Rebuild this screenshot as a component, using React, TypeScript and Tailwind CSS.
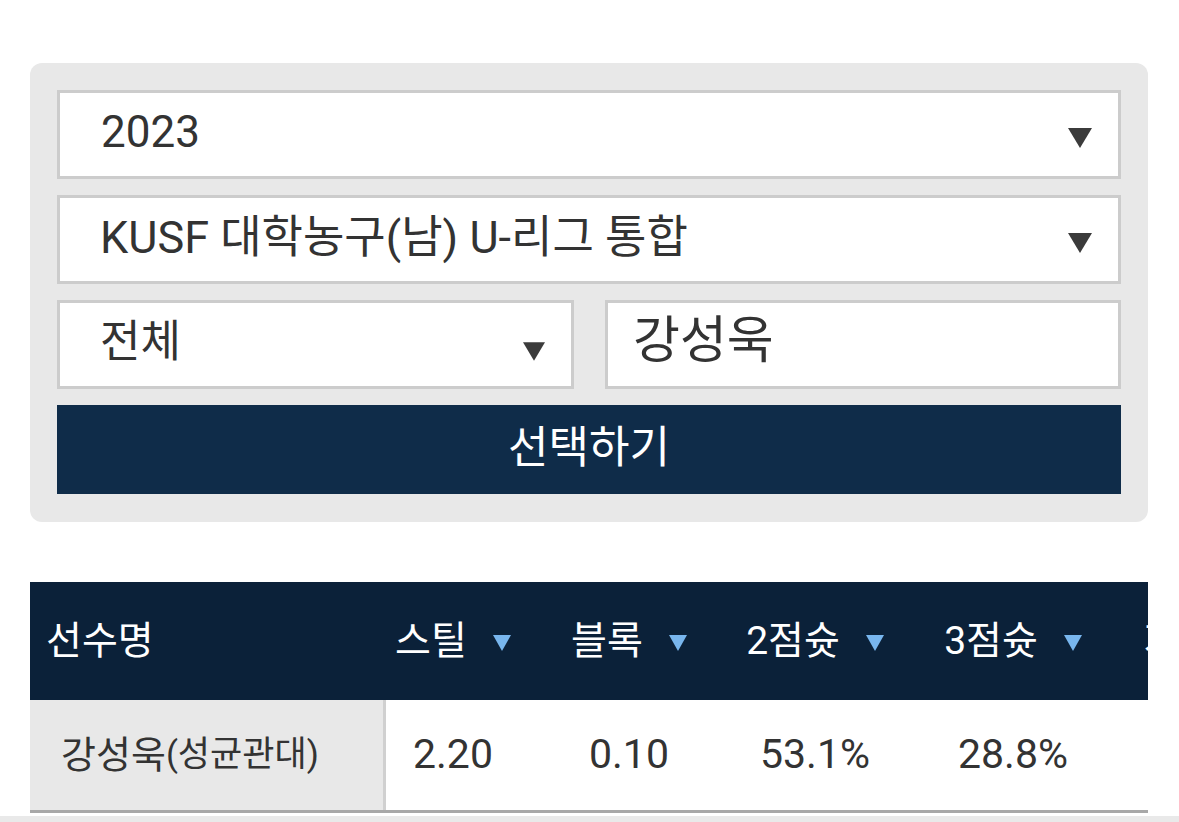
import React from "react";

const font = { fontFamily: "Roboto, 'Noto Sans CJK KR', sans-serif" };

function DarkTri({ className }: { className: string }) {
  return (
    <svg viewBox="0 0 24 20" className={className}>
      <polygon points="0,0 24,0 12,20" fill="#3b3b3b" />
    </svg>
  );
}

function BlueTri() {
  return (
    <svg viewBox="0 0 18 16" className="w-[18px] h-[16px] ml-[26px] mt-[4px]">
      <polygon points="0,0 18,0 9,16" fill="#78b6ee" />
    </svg>
  );
}

function Head({ label, w, extra }: { label: string; w: string; extra?: string }) {
  return (
    <div className={`${w} shrink-0 flex items-center justify-center ${extra ?? ""}`}>
      <span>{label}</span>
      <BlueTri />
    </div>
  );
}

function Cell({ v, w, extra }: { v: string; w: string; extra?: string }) {
  return (
    <div className={`${w} shrink-0 flex items-center justify-center ${extra ?? ""}`}>
      {v}
    </div>
  );
}

export default function App() {
  return (
    <div className="w-[1179px] h-[822px] bg-white overflow-hidden relative" style={font}>
      <div className="pl-[30px] pt-[63px] w-[1148px]">
        <div className="bg-[#e8e8e8] rounded-[12px] px-[27px] pt-[27px] pb-[28px] flex flex-col gap-[16px]">
          <div className="h-[89px] bg-white border-[3px] border-[#cccccc] flex items-center justify-between pl-[41px] pr-[26px] text-[#333333] text-[44px]">
            <span className="leading-none mb-[5px]">2023</span>
            <DarkTri className="w-[24px] h-[20px] mt-[6px]" />
          </div>
          <div className="h-[89px] bg-white border-[3px] border-[#cccccc] flex items-center justify-between pl-[40px] pr-[26px] text-[#333333] text-[45px]">
            <span className="leading-none mb-[4px]">KUSF 대학농구(남) U-리그 통합</span>
            <DarkTri className="w-[24px] h-[20px] mt-[6px]" />
          </div>
          <div className="flex gap-[31px]">
            <div className="w-[517px] h-[89px] bg-white border-[3px] border-[#cccccc] flex items-center justify-between pl-[40px] pr-[26px] text-[#333333] text-[44px]">
              <span className="leading-none mb-[6px]">전체</span>
              <DarkTri className="w-[22px] h-[19px] mt-[14px]" />
            </div>
            <div className="flex-1 h-[89px] bg-white border-[3px] border-[#cccccc] flex items-center pl-[25px] text-[#333333] text-[51px]">
              <span className="leading-none mb-[8px]">강성욱</span>
            </div>
          </div>
          <div className="h-[89px] bg-[#0f2c49] flex items-center justify-center text-white text-[44px]">
            <span className="leading-none mb-[4px]">선택하기</span>
          </div>
        </div>

        <div className="mt-[60px] w-[1118px] overflow-hidden">
          <div className="flex h-[118px] bg-[#0b2139] text-white text-[39px] w-[1400px]">
            <div className="w-[356px] shrink-0 flex items-center pl-[16px]">선수명</div>
            <Head label="스틸" w="w-[155px]" extra="pr-[21px]" />
            <Head label="블록" w="w-[176px]" />
            <Head label="2점슛" w="w-[196px]" />
            <Head label="3점슛" w="w-[200px]" />
            <div className="w-[200px] shrink-0 flex items-center pl-[31px]">자유투</div>
          </div>
          <div className="flex h-[113px] text-[#333333] text-[41px] w-[1400px] border-b-[3px] border-[#a8a8a8]">
            <div className="w-[356px] shrink-0 bg-[#e8e8e8] border-r-[3px] border-[#d0d0d0] flex items-center pl-[31px]">
              <span className="text-[38px]">강성욱</span>
              <span className="text-[35px]">(성균관대)</span>
            </div>
            <Cell v="2.20" w="w-[155px]" extra="pr-[21px]" />
            <Cell v="0.10" w="w-[176px]" />
            <Cell v="53.1%" w="w-[196px]" />
            <Cell v="28.8%" w="w-[200px]" />
            <Cell v="" w="w-[200px]" />
          </div>
        </div>
      </div>
      <div className="absolute left-0 right-0 bottom-0 h-[6px] bg-[#e9e9e9]" />
    </div>
  );
}
